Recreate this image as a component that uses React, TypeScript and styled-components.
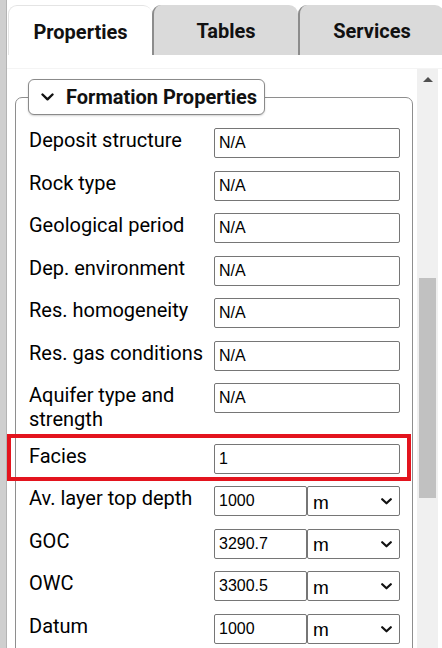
import React from "react";
import styled, { createGlobalStyle } from "styled-components";

const Global = createGlobalStyle`
  html, body { margin: 0; padding: 0; background: #ffffff; }
  body { font-family: Roboto, "Noto Sans", Arial, sans-serif; color: #000; }
  * { box-sizing: border-box; }
`;

const Page = styled.div`
  display: flex;
  width: 442px;
  height: 648px;
  overflow: hidden;
  background: #fff;
`;

const SideStrip = styled.div`
  width: 7px;
  flex: none;
  background: #cfcfcf;
  border-right: 1px solid #b4b4b4;
`;

const Main = styled.div`
  flex: 1;
  display: flex;
  flex-direction: column;
  min-width: 0;
`;

const TabBar = styled.div`
  display: flex;
  height: 55px;
  padding: 5px 0 0 1px;
  flex: none;
`;

const Tab = styled.div<{ $active?: boolean; $w: number }>`
  width: ${(p) => p.$w}px;
  flex: none;
  display: flex;
  align-items: center;
  justify-content: center;
  padding-top: 2px;
  font-family: Roboto, Arial, sans-serif;
  font-weight: 700;
  font-size: 20px;
  color: #111;
  border-radius: 9px 9px 0 0;
  background: ${(p) => (p.$active ? "#ffffff" : "#dadada")};
  border-left: ${(p) => (p.$active ? "1px solid #e4e4e4" : "2px solid #8c8c8c")};
  border-top: ${(p) => (p.$active ? "1px solid #e4e4e4" : "none")};
`;

const Body = styled.div`
  flex: 1;
  display: flex;
  margin-top: 13px;
  border-top: 1px solid #f4f4f4;
  min-height: 0;
`;

const Content = styled.div`
  flex: 1;
  min-width: 0;
  padding: 10px 4px 0 8px;
  overflow: hidden;
`;

const Fieldset = styled.fieldset`
  margin: 0;
  border: 1px solid #8e8e8e;
  border-radius: 7px;
  padding: 13px 13px 20px 13px;
  min-width: 0;
`;

const Legend = styled.legend`
  display: flex;
  align-items: center;
  gap: 12px;
  margin-left: -1px;
  padding: 0 7px 0 12px;
  height: 36px;
  border: 1px solid #8a8a8a;
  border-radius: 6px;
  box-shadow: 0 1px 2px rgba(0, 0, 0, 0.18);
  background: #fff;
  font-family: Roboto, Arial, sans-serif;
  font-weight: 700;
  font-size: 20px;
  color: #111;
`;

const Rows = styled.div`
  display: flex;
  flex-direction: column;
  gap: 12.5px;
`;

const Row = styled.div`
  display: grid;
  grid-template-columns: 185px 186px;
  align-items: start;
`;

const Label = styled.div`
  font-family: Roboto, Arial, sans-serif;
  font-size: 20px;
  line-height: 23.5px;
  padding-top: 1px;
  color: #000;
`;

const TextInput = styled.input`
  height: 30px;
  width: 100%;
  margin: 0;
  border: 1px solid #767676;
  border-radius: 2px;
  padding: 0 4px;
  font-family: "Liberation Sans", Arial, sans-serif;
  font-size: 16px;
  color: #000;
  background: #fff;
  outline: none;
`;

const Pair = styled.div`
  display: grid;
  grid-template-columns: 93px 93px;
`;

const SelectWrap = styled.div`
  position: relative;
`;

const Select = styled.select`
  appearance: none;
  -webkit-appearance: none;
  height: 30px;
  width: 100%;
  margin: 0;
  border: 1px solid #767676;
  border-radius: 2px;
  padding: 2px 0 0 5px;
  font-family: "Liberation Sans", Arial, sans-serif;
  font-size: 19px;
  color: #000;
  background: #fff;
  outline: none;
`;

const Chevron = styled.svg`
  position: absolute;
  right: 8px;
  top: 12px;
  pointer-events: none;
`;

const Highlight = styled.div`
  position: relative;
  &::after {
    content: "";
    position: absolute;
    top: -10px;
    bottom: -7px;
    left: -22px;
    right: -12px;
    border: 4px solid #e3141e;
    pointer-events: none;
  }
`;

const ScrollTrack = styled.div`
  width: 21px;
  flex: none;
  margin-right: 4px;
  background: #f0f0f0;
  display: flex;
  flex-direction: column;
  align-items: center;
`;

const ArrowUp = styled.div`
  margin-top: 8px;
  width: 0;
  height: 0;
  border-left: 5px solid transparent;
  border-right: 5px solid transparent;
  border-bottom: 5px solid #505050;
`;

const Thumb = styled.div`
  margin-top: 196px;
  width: 17px;
  height: 220px;
  background: #c1c1c1;
`;

type Field =
  | { label: string; value: string }
  | { label: string; value: string; unit: string };

const fields: Field[] = [
  { label: "Deposit structure", value: "N/A" },
  { label: "Rock type", value: "N/A" },
  { label: "Geological period", value: "N/A" },
  { label: "Dep. environment", value: "N/A" },
  { label: "Res. homogeneity", value: "N/A" },
  { label: "Res. gas conditions", value: "N/A" },
  { label: "Aquifer type and strength", value: "N/A" },
  { label: "Facies", value: "1" },
  { label: "Av. layer top depth", value: "1000", unit: "m" },
  { label: "GOC", value: "3290.7", unit: "m" },
  { label: "OWC", value: "3300.5", unit: "m" },
  { label: "Datum", value: "1000", unit: "m" },
];

function FieldRow({ f }: { f: Field }) {
  return (
    <Row>
      <Label>{f.label}</Label>
      {"unit" in f ? (
        <Pair>
          <TextInput defaultValue={f.value} />
          <SelectWrap>
            <Select defaultValue={f.unit}>
              <option value="m">m</option>
              <option value="ft">ft</option>
            </Select>
            <Chevron width="11" height="7" viewBox="0 0 11 7">
              <polyline
                points="1.2,1.2 5.5,5.3 9.8,1.2"
                fill="none"
                stroke="#111"
                strokeWidth="2.2"
                strokeLinecap="round"
                strokeLinejoin="round"
              />
            </Chevron>
          </SelectWrap>
        </Pair>
      ) : (
        <TextInput defaultValue={f.value} />
      )}
    </Row>
  );
}

export default function App() {
  return (
    <>
      <Global />
      <Page>
        <SideStrip />
        <Main>
          <TabBar>
            <Tab $active $w={144}>Properties</Tab>
            <Tab $w={146}>Tables</Tab>
            <Tab $w={146}>Services</Tab>
          </TabBar>
          <Body>
            <Content>
              <Fieldset>
                <Legend>
                  <svg width="13" height="8" viewBox="0 0 13 8">
                    <polyline
                      points="1.5,1.5 6.5,6.3 11.5,1.5"
                      fill="none"
                      stroke="#111"
                      strokeWidth="2.4"
                      strokeLinecap="round"
                      strokeLinejoin="round"
                    />
                  </svg>
                  Formation Properties
                </Legend>
                <Rows>
                  {fields.map((f) =>
                    f.label === "Facies" ? (
                      <Highlight key={f.label}>
                        <FieldRow f={f} />
                      </Highlight>
                    ) : (
                      <FieldRow key={f.label} f={f} />
                    )
                  )}
                </Rows>
              </Fieldset>
            </Content>
            <ScrollTrack>
              <ArrowUp />
              <Thumb />
            </ScrollTrack>
          </Body>
        </Main>
      </Page>
    </>
  );
}
